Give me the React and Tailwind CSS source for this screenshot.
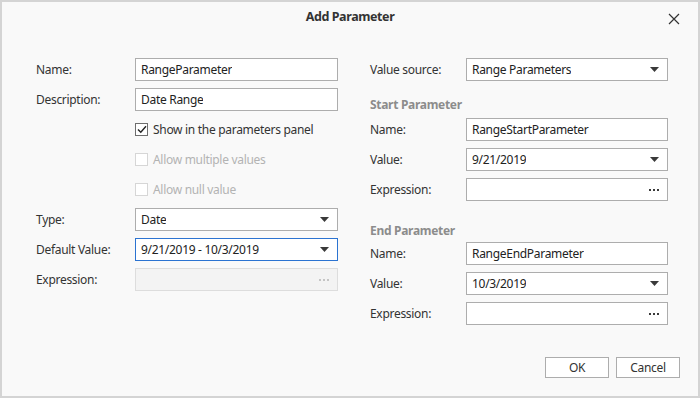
const font = { fontFamily: '"Noto Sans", "Open Sans", sans-serif' }

function Arrow() {
  return (
    <svg width="9" height="5" viewBox="0 0 9 5" className="shrink-0">
      <path d="M0 0H9L4.5 5Z" fill="#3a3a3a" />
    </svg>
  )
}

function Dots({ disabled }) {
  const c = disabled ? 'bg-[#c4c4c4]' : 'bg-[#3a3a3a]'
  return (
    <div className="flex gap-[2px] shrink-0">
      <span className={`w-[2px] h-[2px] ${c}`} />
      <span className={`w-[2px] h-[2px] ${c}`} />
      <span className={`w-[2px] h-[2px] ${c}`} />
    </div>
  )
}

function Field({ label, labelW, value, kind = 'text', focused, disabled }) {
  const border = focused ? 'border-[#2b73d1]' : disabled ? 'border-[#dddddd]' : 'border-[#adadad]'
  const bg = disabled ? 'bg-[#f3f3f3]' : 'bg-white'
  return (
    <div className="flex items-center h-[23px] mb-[7px]">
      <div className={`${labelW} shrink-0 text-[#333333]`}>{label}</div>
      <div className={`flex-1 h-[23px] flex items-center justify-between border ${border} ${bg} pl-[5px] pr-[8px]`}>
        <span className="text-[#222222] truncate">{value}</span>
        {kind === 'select' && <Arrow />}
        {kind === 'expr' && <Dots disabled={disabled} />}
      </div>
    </div>
  )
}

function Check({ label, checked, disabled }) {
  return (
    <div className="flex items-center h-[23px] mb-[7px] pl-[99px]">
      <div className={`w-[13px] h-[13px] border ${disabled ? 'border-[#d6d6d6]' : 'border-[#6e6e6e]'} bg-white flex items-center justify-center shrink-0`}>
        {checked && (
          <svg width="10" height="9" viewBox="0 0 10 9">
            <path d="M1 4.5L3.8 7.3L9 1.3" stroke="#222" strokeWidth="1.4" fill="none" />
          </svg>
        )}
      </div>
      <span className={`ml-[5px] ${disabled ? 'text-[#b3b3b3]' : 'text-[#333333]'}`}>{label}</span>
    </div>
  )
}

export default function App() {
  return (
    <div style={font} className="w-[700px] h-[398px] border-2 border-[#d4d4d4] bg-[#f9f9f9] text-[12px] tracking-[-0.3px] flex flex-col relative">
      <div className="h-[31px] flex items-center justify-center font-bold text-[12.5px] tracking-[-0.4px] text-[#333333]">Add Parameter</div>
      <button className="absolute right-[18px] top-[11px] w-[12px] h-[12px]">
        <svg width="12" height="12" viewBox="0 0 12 12">
          <path d="M1 1L11 11M11 1L1 11" stroke="#333" strokeWidth="1.2" />
        </svg>
      </button>
      <div className="flex pl-[34px] pt-[25px]">
        <div className="w-[302px]">
          <Field label="Name:" labelW="w-[99px]" value="RangeParameter" />
          <Field label="Description:" labelW="w-[99px]" value="Date Range" />
          <Check label="Show in the parameters panel" checked />
          <Check label="Allow multiple values" disabled />
          <Check label="Allow null value" disabled />
          <Field label="Type:" labelW="w-[99px]" value="Date" kind="select" />
          <Field label="Default Value:" labelW="w-[99px]" value="9/21/2019 - 10/3/2019" kind="select" focused />
          <Field label="Expression:" labelW="w-[99px]" value="" kind="expr" disabled />
        </div>
        <div className="w-[298px] ml-[32px]">
          <Field label="Value source:" labelW="w-[96px]" value="Range Parameters" kind="select" />
          <div className="h-[30px] pt-[8px] font-bold text-[#8c8c8c]">Start Parameter</div>
          <Field label="Name:" labelW="w-[96px]" value="RangeStartParameter" />
          <Field label="Value:" labelW="w-[96px]" value="9/21/2019" kind="select" />
          <Field label="Expression:" labelW="w-[96px]" value="" kind="expr" />
          <div className="h-[34px] pt-[14px] font-bold text-[#8c8c8c]">End Parameter</div>
          <Field label="Name:" labelW="w-[96px]" value="RangeEndParameter" />
          <Field label="Value:" labelW="w-[96px]" value="10/3/2019" kind="select" />
          <Field label="Expression:" labelW="w-[96px]" value="" kind="expr" />
        </div>
      </div>
      <div className="flex justify-end gap-[7px] pr-[18px] mt-[25px]">
        <button className="w-[64px] h-[21px] border border-[#adadad] bg-white text-[#333333]">OK</button>
        <button className="w-[64px] h-[21px] border border-[#adadad] bg-white text-[#333333]">Cancel</button>
      </div>
    </div>
  )
}
